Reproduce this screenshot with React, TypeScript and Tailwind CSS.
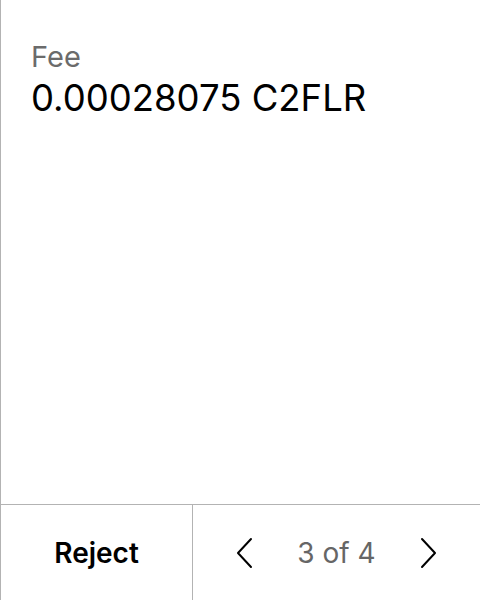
export default function App() {
  return (
    <div
      className="w-[480px] h-[600px] flex flex-col bg-white border-l border-[#b3b3b3] text-black"
      style={{ fontFamily: "Inter, 'Noto Sans', sans-serif" }}
    >
      <div className="flex-1 pl-[30px] pt-[40px]">
        <div className="text-[29px] leading-[34px] text-[#6b6b6b]">Fee</div>
        <div className="mt-[2px] text-[36.5px] leading-[44px] whitespace-nowrap">0.00028075 C2FLR</div>
      </div>
      <div className="h-[96px] flex border-t border-[#b3b3b3]">
        <button className="w-[192px] flex items-center justify-center text-[28px] font-semibold border-r border-[#b3b3b3]">
          Reject
        </button>
        <div className="flex-1 flex items-center justify-between px-[42px]">
          <svg width="18" height="32" viewBox="0 0 18 32" fill="none" stroke="currentColor" strokeWidth="2" strokeLinecap="round" strokeLinejoin="round">
            <path d="M16 2 L3 16 L16 30" />
          </svg>
          <span className="text-[28px] text-[#666666]">3 of 4</span>
          <svg width="18" height="32" viewBox="0 0 18 32" fill="none" stroke="currentColor" strokeWidth="2" strokeLinecap="round" strokeLinejoin="round">
            <path d="M2 2 L15 16 L2 30" />
          </svg>
        </div>
      </div>
    </div>
  );
}
